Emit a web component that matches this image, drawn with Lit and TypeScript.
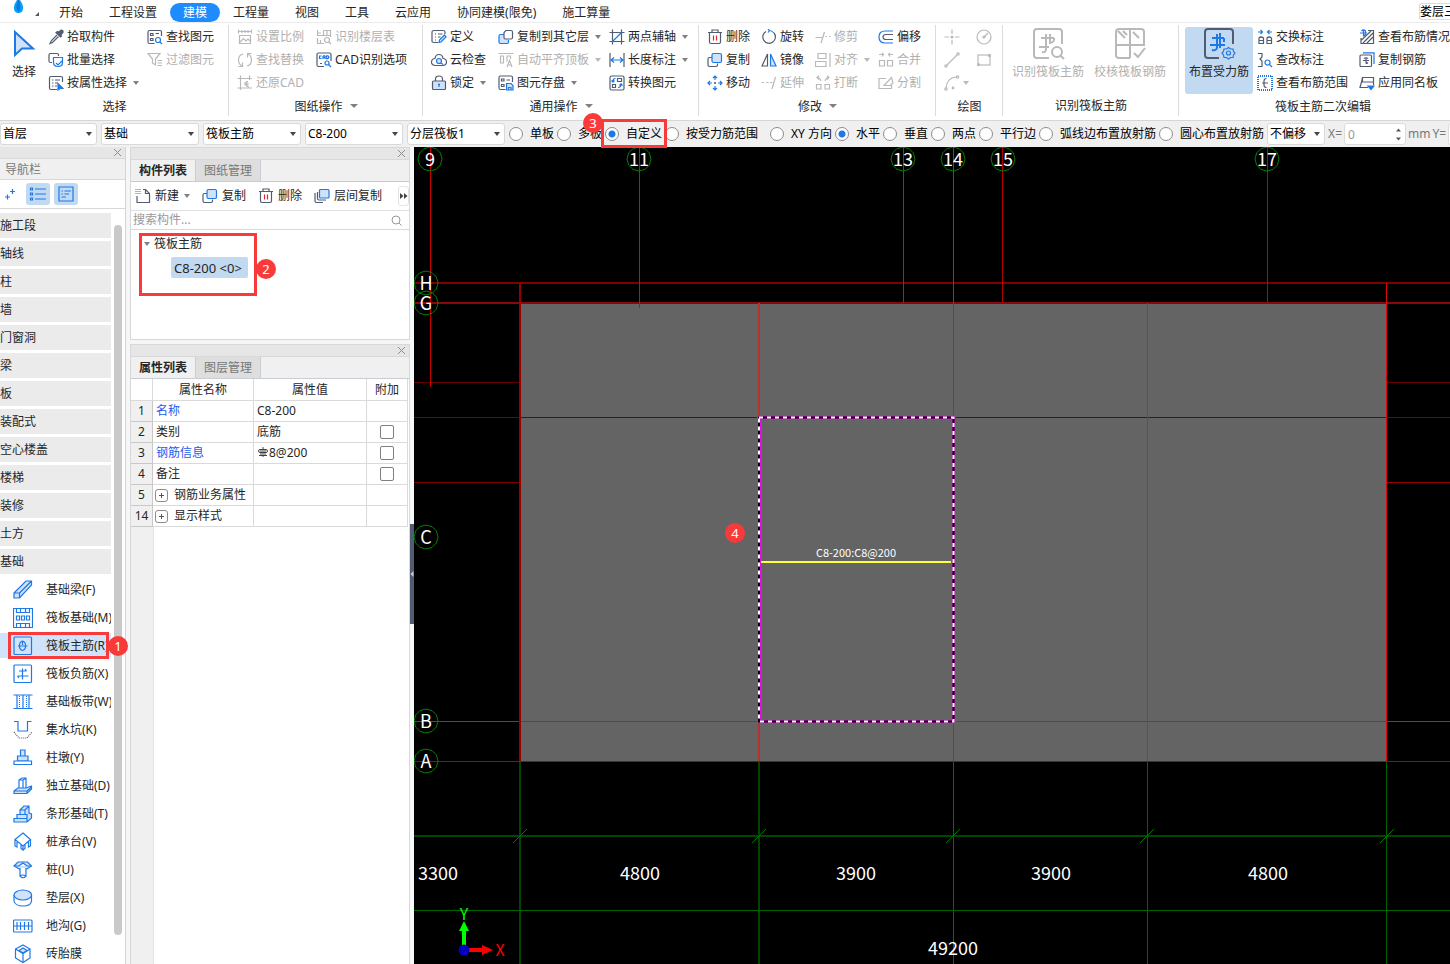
import { LitElement, html, svg, css, nothing, TemplateResult, SVGTemplateResult } from "lit";
import { customElement, state } from "lit/decorators.js";
import { classMap } from "lit/directives/class-map.js";

/* Icon artwork. Classes: k = slate stroke, b = blue stroke, g = disabled stroke,
   f adds a pale fill, s turns the stroke into a solid fill. */
const ICONS: Record<string, SVGTemplateResult> = {
  pick: svg`<path class="k" d="M9 6 3.5 11.5 2 14.5 4.5 13.5 10.5 7.5"/><path class="k s" d="M8 3.5 12.5 8 13.5 7 12.5 6 15 3.5Q15.5 1 13 1L10.5 3.5 9.5 2.5Z"/>`,
  batch: svg`<path class="k" d="M4 10.5H2.5Q1 10.5 1 9V3Q1 1.5 2.5 1.5H9Q10.5 1.5 10.5 3V4"/><path class="b" d="M5.5 5.5H14.5V10.5Q14.5 14.5 10 14.5T5.5 10.5Z"/><path class="b" d="M8 11 10 13 14 9"/>`,
  byattr: svg`<path class="k" d="M9 14.5H3Q1.5 14.5 1.5 13V3Q1.5 1.5 3 1.5H13Q14.5 1.5 14.5 3V7M4 5H5.5M7 5H12M4 8H5.5M7 8H10M4 11H5.5M7 11H9"/><path class="b s" d="M10 8.5V15L12 13.5H15Z"/>`,
  find: svg`<path class="k" d="M7.5 14.5H2.5Q1 14.5 1 13V3Q1 1.5 2.5 1.5H13Q14.5 1.5 14.5 3V7M3.5 4.5H6V6.5H3.5ZM8.5 4.5H12M3.5 9.5H6V11.5H3.5Z"/><circle class="b" cx="11" cy="11" r="2.5"/><path class="b" d="M13 13 15 15"/>`,
  filter: svg`<path class="g" d="M1 1.5H13L8.5 7V13L5.5 11V7ZM10.5 8.5H15M10.5 11H15M10.5 13.5H15"/>`,
  scale: svg`<path class="g" d="M1 2.5H15M1.5 0.5V4.5M5 1V4M8 1V4M11 1V4M14.5 0.5V4.5M2.5 6.5H13.5V14.5H2.5ZM3 13 6.5 9.5 9 12 11 10 13.5 12.5"/>`,
  swap: svg`<path class="g" d="M6 2Q1.5 3 1.5 8 1.5 12 5 14M5.5 10.5V14.5H1.5M10 14Q14.5 13 14.5 8 14.5 4 11 2M10.5 5.5V1.5H14.5"/>`,
  restore: svg`<path class="g" d="M3.5 0.5V15M0.5 3.5H15M12.5 0.5V5M0.5 13H15M11 6.5Q7 7 8 9T12 12M7 9H12M10 6V12"/>`,
  floor: svg`<path class="g" d="M1.5 1V6.5H7M1.5 4H5M7.5 1.5H14.5V8M7.5 1.5V6.5H14.5M11 1.5V6.5M1.5 9V14.5H8M4.5 11V14"/><circle class="g" cx="11" cy="11" r="2.5"/><path class="g" d="M13 13 15 15"/>`,
  cad: svg`<path class="k" d="M8 14.5H2.5Q1 14.5 1 13V2.5Q1 1 2.5 1H13.5Q15 1 15 2.5V9M4 11.5H6"/><path class="b" d="M5.5 4H3.5V6.5H5.5M7 7V4.5L8 3.5 9 4.5V7M7 5.5H9M10.5 3.8V6.7H12L13 5.2 12 3.8Z"/><circle class="b" cx="11" cy="11" r="2"/><path class="b" d="M12.5 12.5 15 15"/>`,
  define: svg`<path class="k" d="M7 13.5H3Q1 13.5 1 12V3Q1 1.5 3 1.5H12Q14 1.5 14 3V5M4 5H5M7 5H11.5M4 8H5M7 8H9.5M4 11H5"/><path class="b f" d="M8 13.5 8.5 11 13.5 6 15 8 10 13Z"/>`,
  cloud: svg`<path class="k" d="M4 13.5Q0.5 13 0.5 10T4 6.5Q4.5 2.5 8 2.5T12 6.5Q15.5 7 15.5 10T12 13.5Z"/><circle class="b f" cx="8" cy="9" r="2.5"/><path class="b" d="M10 11 12 12.5"/>`,
  lock: svg`<path class="k" d="M4.5 6V4Q4.5 1 8 1T11.5 4V6"/><rect class="k f" x="1.5" y="6" width="13" height="8.5" rx="1"/><path class="b" d="M8 8.5V12M7 9.5H9"/>`,
  copyto: svg`<path class="b f" d="M6 5.5H2.5Q1 5.5 1 7V13Q1 14.5 2.5 14.5H9Q10.5 14.5 10.5 13V11"/><path class="k w" d="M8 1.5H13Q14.5 1.5 14.5 3V8.5Q14.5 10 13 10H7.5Q6 10 6 8.5V3.5Z"/>`,
  flush: svg`<path class="g" d="M0.5 1.5H15.5M2.5 4V11H5.5V4ZM9 9.5V4H12.5V7M9 15 11.5 8.5 14 15M10 13H13"/>`,
  save: svg`<path class="k" d="M7.5 14.5H2.5Q1 14.5 1 13V2.5Q1 1 2.5 1H13Q14.5 1 14.5 2.5V7M3.5 4H6V6H3.5ZM8.5 5H12M3.5 9.5H6V11.5H3.5Z"/><path class="b f" d="M8.5 8.5H13L15 10.5V15H8.5ZM10.5 15V12.5H13V15"/>`,
  axis2: svg`<path class="k" d="M3.5 0.5V15.5M12.5 0.5V15.5M0.5 3.5H15.5M0.5 12.5H15.5"/><path class="b" d="M3 13 13 3"/>`,
  dim: svg`<path class="k" d="M1 1V15M15 1V15"/><path class="b" d="M2 8H14M5 5.5 2 8 5 10.5M11 5.5 14 8 11 10.5"/>`,
  conv: svg`<rect class="k" x="1" y="1" width="14" height="14" rx="1.5"/><path class="k" d="M8.5 3.5H12.5V6.5H8.5ZM3.5 9.5H6.5V12.5H3.5Z"/><path class="b" d="M6.5 3.5Q3.5 3.5 4 7M2.5 5.5 4 7.2 5.5 5.5M9 12.5Q12 12.5 12 9M10.5 10.5 12 8.8 13.5 10.5"/>`,
  del: svg`<path class="k" d="M1 3.5H15M5 3.5V1H11V3.5M2.5 3.5V13Q2.5 14.5 4 14.5H12Q13.5 14.5 13.5 13V3.5"/><path class="r" d="M6.5 6.5V11.5M9.5 6.5V11.5"/>`,
  copy: svg`<path class="k" d="M5 5.5H2.5Q1 5.5 1 7V13Q1 14.5 2.5 14.5H9Q10.5 14.5 10.5 13V11.5"/><rect class="b f" x="5" y="1.5" width="9.5" height="9" rx="1.5"/>`,
  move: svg`<path class="b" d="M8 1V5M8 11V15M1 8H5M11 8H15M6 3 8 1 10 3M6 13 8 15 10 13M3 6 1 8 3 10M13 6 15 8 13 10"/><path class="k" d="M8 7V9M7 8H9"/>`,
  rotate: svg`<path class="k" d="M5 2.5A6.3 6.3 0 1 0 13 4"/><path class="b" d="M8 1.5Q11 1.5 13 4M7 0 8.5 1.5 7 3.5"/>`,
  mirror: svg`<path class="k" d="M6.5 2V14H1Z"/><path class="b f" d="M9.5 2V14H15Z"/>`,
  trim: svg`<path class="g" d="M0.5 8.5H7M9.5 3 6 14M10.5 7.5H12M14 7.5H15.5"/>`,
  align: svg`<path class="g" d="M15 1V15M3 1.5H11V6.5H3ZM0.5 9.5H11V14.5H0.5Z"/>`,
  extend: svg`<path class="g" d="M0.5 7.5H3M5 7.5H7.5M9 7.5H11.5M14.5 2 11 14"/>`,
  brk: svg`<path class="g" d="M1.5 9.5H6V14H1.5ZM10 9.5H14.5V14H10ZM6 6Q5 2.5 2 2.5M4 0.8 2 2.5 4 4.5M10 6Q11 2.5 14 2.5M12 0.8 14 2.5 12 4.5"/>`,
  offset: svg`<path class="b" d="M15 2H7Q1 2 1 8T7 14H15"/><path class="k" d="M15 5.5H8Q5 5.5 5 8T8 10.5H15"/>`,
  merge: svg`<path class="g" d="M1.5 8.5H6.5V14H1.5ZM9.5 8.5H14.5V14H9.5ZM1 2.5H5.5M4 1 5.5 2.5 4 4.5M15 2.5H10.5M12 1 10.5 2.5 12 4.5"/>`,
  split: svg`<path class="g" d="M8 3.5H1V13.5H13.5V9M6 10.5 13.5 2.5 15 8 12 10.5Z"/>`,
  point: svg`<path class="g" d="M8 0.5V5M8 11V15.5M0.5 8H5M11 8H15.5"/><circle class="g s" cx="8" cy="8" r="1"/>`,
  circle: svg`<circle class="g" cx="8" cy="8" r="7"/><path class="g" d="M8 8 12 4"/><circle class="g s" cx="8" cy="8" r="1"/>`,
  line: svg`<path class="g" d="M3 13 13 3"/><circle class="g" cx="2" cy="14" r="1.2"/><circle class="g" cx="14" cy="2" r="1.2"/>`,
  rect: svg`<rect class="g" x="2" y="3" width="12" height="10"/><circle class="g s" cx="2.5" cy="12.5" r="1"/><circle class="g s" cx="13.5" cy="3.5" r="1"/>`,
  arc: svg`<path class="g" d="M2 13Q3 3 12 2"/><circle class="g" cx="2" cy="14" r="1.2"/><circle class="g" cx="13.5" cy="2" r="1.2"/><circle class="g s" cx="9" cy="13" r=".8"/>`,
  swapnote: svg`<path class="k" d="M2 14.5V9Q4 7 6.5 9V14.5ZM2 11.5H6.5M10 14.5V9Q12 7 14.5 9V14.5ZM10 11.5H14.5"/><path class="b" d="M1 3H5.5M3.5 1 5.5 3 3.5 5M15 3H10.5M12.5 1 10.5 3 12.5 5"/>`,
  editnote: svg`<path class="k" d="M1 1.5H5V5L3 7 5 9V14.5H1"/><circle class="b" cx="10.5" cy="10.5" r="2.5"/><path class="b" d="M12.5 12.5 15 15"/>`,
  range: svg`<rect class="b d thick" x="1" y="1" width="14" height="14"/><path class="k" d="M9.5 3.5Q7 3.5 7 6V10Q7 12.5 9.5 12.5M5 8H11"/>`,
  viewbar: svg`<path class="k" d="M9 1.5H14.5V14.5H2V9M4 14 14 4M8 14 14 8M2.5 11 12 2"/><path class="b" d="M1 4H8M4.5 1V7.5M2.5 2Q4.5 0 6.5 2V4.5Q6.5 6.5 4.5 6.5"/>`,
  copybar: svg`<rect class="k" x="1" y="3" width="11.5" height="11.5" rx="1"/><path class="b" d="M4 0.8H15V12"/><path class="k" d="M4 8.5H10M7 5.5V11.5M5 6.5Q7 5 9 6.5M9 10.5Q8 11.5 7 11.5"/>`,
  applyslab: svg`<path class="k" d="M3.5 2.5H14.5V7H3.5ZM2.5 7 1 12.5H9M3.5 2.5 2.5 7M14.5 7V10"/><path class="b s" d="M9 11H15L12 14.5Z"/>`,
  newc: svg`<path class="k" d="M8 1.5H10.5L14.5 5.5V14.5H2V8"/><path class="k" d="M10.5 1.5V5.5H14.5"/><path class="b d" d="M0.5 1.5H6M0.5 3.5H6M0.5 5.5H6"/>`,
  floorcopy: svg`<path class="k" d="M1 5V13Q1 14.5 2.5 14.5H9M3.5 4V10.5Q3.5 12 5 12H12"/><rect class="b f" x="5.5" y="1.5" width="9.5" height="8.5" rx="1"/>`,
};

const NAV_ICONS: Record<string, SVGTemplateResult> = {
  beam: svg`<path class="b f" d="M1 13 13 1H18.5V5L6.5 18H1ZM1 13H6.5V18M6.5 13 18.5 1"/>`,
  raft: svg`<path class="b" d="M0.5 0.5H19.5V19.5H0.5ZM3.5 0.5V4.5H7.5V0.5M12.5 0.5V4.5H16.5V0.5M7.5 4.5H12.5V0.5M3.5 19.5V15.5H7.5V19.5M12.5 19.5V15.5H16.5V19.5M7.5 15.5H12.5M3.5 8H6.5V12H3.5ZM8.5 8H11.5V12H8.5ZM13.5 8H16.5V12H13.5Z"/>`,
  main: svg`<rect class="b" x="1" y="1" width="17.5" height="17.5" rx="1"/><path class="b" d="M5 10H14.5M9.5 5V9M9.5 5Q6 6 6.5 11 7 14 9.5 14.5M9.5 5Q13 6 12.5 11 12 14 9.5 14.5"/>`,
  neg: svg`<rect class="b" x="1" y="1" width="17.5" height="17.5" rx="1"/><path class="b" d="M6 7H13.5M4.5 12H15.5M9.5 4.5V15.5M13.5 7 12 5M4.5 12 6 14"/>`,
  strip: svg`<path class="b" d="M0.5 3H19.5M0.5 16.5H19.5M4 3V16.5M16 3V16.5M10 3V16.5"/><path class="b d" d="M6.5 4V16M13.5 4V16"/>`,
  sump: svg`<path class="b" d="M1 1.5H5V11H14.5V1.5H18.5"/><path class="k d" d="M1 12 6 18H14L19 12"/>`,
  pier: svg`<path class="b f" d="M7.5 2H12V8H7.5ZM4.5 8H15V13H4.5Z"/><path class="b w" d="M1 13H18.5V16.5H1Z"/>`,
  isolated: svg`<path class="b" d="M6 12V4L9 2H13V12M10 4V13M6 4H10L13 2"/><path class="b f" d="M1 15 5 12H13L18.5 10V13L14 17.5H1ZM1 15H14V17.5M14 15 18.5 11"/>`,
  stripf: svg`<path class="b f" d="M7 6 11 2H16V9L18.5 10V14L14 18H1V14.5H4V10.5H7ZM7 6H12V10.5H14V14.5H14V18M12 6 16 2M4 10.5H14M4 14.5H14"/>`,
  cap: svg`<path class="b" d="M10 1 17.5 7.5 10 14 2 7.5ZM2 7.5V14L4 15V10M17.5 7.5V14L15.5 15V10M10 14V18L8 16.5V13M10 18 12 16.5V13"/>`,
  pile: svg`<path class="b f" d="M1 6 5 2H14.5L18.5 6 14 9H6Z"/><path class="b w" d="M7 8V16Q10 19.5 13 16V8M1 6H6L10 3 14 6H18.5M7 16Q10 14 13 16"/>`,
  cushion: svg`<path class="b" d="M1 7V13Q2 18 10 18T18.5 13V7"/><ellipse class="b f" cx="9.8" cy="7" rx="8.8" ry="5"/>`,
  trench: svg`<rect class="b" x="0.5" y="4" width="18.5" height="12" rx="1"/><path class="b" d="M1 10H19M4 6V14M7.5 6V14M11.5 6V14M15.5 6V14"/>`,
  mould: svg`<path class="b" d="M10 1 17 5V14L10 18.5 2.5 14V5Z"/><path class="b f" d="M6 6.5 10 4 14 6.5 10 9Z"/><path class="b" d="M2.5 5 10 9.5 17 5M10 9.5V18"/>`,
};

const icon = (n: string) => html`<svg class="ic" viewBox="0 0 16 16" aria-hidden="true">${ICONS[n]}</svg>`;

type Tool = { i: string; t: string; off?: boolean; caret?: boolean };
const T = (i: string, t: string, o = ""): Tool => ({ i, t, off: o.includes("x"), caret: o.includes("v") });

const SELECT_COLS = [
  [T("pick", "拾取构件"), T("batch", "批量选择"), T("byattr", "按属性选择", "v")],
  [T("find", "查找图元"), T("filter", "过滤图元", "x")],
];
const SHEET_COLS = [
  [T("scale", "设置比例", "x"), T("swap", "查找替换", "x"), T("restore", "还原CAD", "x")],
  [T("floor", "识别楼层表", "x"), T("cad", "CAD识别选项")],
];
const COMMON_COLS = [
  [T("define", "定义"), T("cloud", "云检查"), T("lock", "锁定", "v")],
  [T("copyto", "复制到其它层", "v"), T("flush", "自动平齐顶板", "xv"), T("save", "图元存盘", "v")],
  [T("axis2", "两点辅轴", "v"), T("dim", "长度标注", "v"), T("conv", "转换图元")],
];
const MODIFY_COLS = [
  [T("del", "删除"), T("copy", "复制"), T("move", "移动")],
  [T("rotate", "旋转"), T("mirror", "镜像"), T("extend", "延伸", "x")],
  [T("trim", "修剪", "x"), T("align", "对齐", "xv"), T("brk", "打断", "x")],
  [T("offset", "偏移"), T("merge", "合并", "x"), T("split", "分割", "x")],
];
const EDIT_COLS = [
  [T("swapnote", "交换标注"), T("editnote", "查改标注"), T("range", "查看布筋范围")],
  [T("viewbar", "查看布筋情况"), T("copybar", "复制钢筋"), T("applyslab", "应用同名板")],
];

const NAV = ["施工段", "轴线", "柱", "墙", "门窗洞", "梁", "板", "装配式", "空心楼盖", "楼梯", "装修", "土方", "基础"];
const SUB: [string, string][] = [
  ["beam", "基础梁(F)"], ["raft", "筏板基础(M)"], ["main", "筏板主筋(R)"], ["neg", "筏板负筋(X)"],
  ["strip", "基础板带(W)"], ["sump", "集水坑(K)"], ["pier", "柱墩(Y)"], ["isolated", "独立基础(D)"],
  ["stripf", "条形基础(T)"], ["cap", "桩承台(V)"], ["pile", "桩(U)"], ["cushion", "垫层(X)"],
  ["trench", "地沟(G)"], ["mould", "砖胎膜"],
];

const AXES_TOP: [number, string][] = [[430, "9"], [639, "11"], [903, "13"], [953, "14"], [1003, "15"], [1267, "17"]];
const AXES_LEFT: [number, string][] = [[283, "H"], [303, "G"], [537, "C"], [721, "B"], [761, "A"]];
const GRID: [number, number, number, number, string, number][] = [
  [414, 283, 1450, 283, "#800000", 2],
  [414, 303, 1450, 303, "#8c0808", 2],
  [414, 382.5, 520, 382.5, "#640000", 1],
  [1387, 382.5, 1450, 382.5, "#640000", 1],
  [414, 417.5, 1450, 417.5, "#780000", 1],
  [414, 482.5, 520, 482.5, "#800000", 1],
  [1387, 482.5, 1450, 482.5, "#900000", 1],
  [414, 721.5, 1450, 721.5, "#d81010", 1],
  [414, 761.5, 1450, 761.5, "#b40000", 1],
  [430.5, 147, 430.5, 387, "#c80000", 1],
  [639.5, 147, 639.5, 308, "#e60000", 1],
  [903.5, 147, 903.5, 303, "#f00000", 1],
  [953.5, 147, 953.5, 761, "#e61010", 1],
  [1002.5, 147, 1002.5, 303, "#b40000", 1],
  [1267.5, 147, 1267.5, 303, "#c80000", 1],
  [520, 283, 520, 761, "#960000", 2],
  [759, 303, 759, 761, "#b43232", 2],
  [1147.5, 303, 1147.5, 761, "#d21e1e", 1],
  [1386.5, 283, 1386.5, 761, "#dc0a0a", 1],
  [520, 762, 520, 964, "#004600", 2],
  [759, 762, 759, 964, "#004600", 2],
  [953.5, 762, 953.5, 964, "#007000", 1],
  [1147.5, 762, 1147.5, 964, "#006400", 1],
  [1386.5, 762, 1386.5, 964, "#006400", 1],
  [414, 836, 1450, 836, "#004600", 2],
  [414, 910.5, 1450, 910.5, "#006400", 1],
];
const DIMS: [number, number, string][] = [
  [438, 880, "3300"], [640, 880, "4800"], [856, 880, "3900"], [1051, 880, "3900"], [1268, 880, "4800"], [953, 955, "49200"],
];

@customElement("app-root")
export class AppRoot extends LitElement {
  @state() private tab = "建模";
  @state() private nav = "筏板主筋(R)";

  static styles = css`
    :host {
      display: flex; flex-direction: column; height: 100vh; overflow: hidden; position: relative;
      background: #f5f6f8; color: #262626;
      font: 12px/16px "Noto Sans", "Noto Sans CJK SC", sans-serif;
    }
    * { box-sizing: border-box; }
    button, input, select { font: inherit; color: inherit; margin: 0; }
    button { border: 0; padding: 0; background: none; white-space: nowrap; }
    svg { display: block; flex: none; }
    .ic { width: 16px; height: 16px; }
    .k, .b, .g, .r { fill: none; stroke-width: 1.2; }
    .k { stroke: #525c70; }
    .b { stroke: #1e78e6; }
    .g { stroke: #b9b9b9; }
    .r { stroke: #e02828; }
    .f { fill: #cfe2fa; }
    .w { fill: #fff; }
    .k.s { fill: #525c70; }
    .b.s { fill: #1e78e6; }
    .g.s { fill: #b9b9b9; }
    .d { stroke-dasharray: 1 1; }
    .thick { stroke-width: 2; }
    .caret { width: 0; height: 0; border: 3px solid transparent; border-top: 4px solid #808080; border-bottom: 0; flex: none; }
    .caret.big { border-width: 4px 4px 0; }

    .tabs { display: flex; height: 22px; flex: none; background: #fff; align-items: flex-end; }
    .logo { width: 46px; height: 20px; margin-bottom: 2px; }
    .tab { height: 19px; padding: 0 13px; border-radius: 10px; line-height: 19px; }
    .tab.on { background: #1e8cff; color: #fff; }
    .floor3d { margin-left: auto; width: 31px; height: 17px; border: 1px solid #dcdcdc; border-right: 0; border-radius: 3px 0 0 3px; overflow: hidden; margin-bottom: 2px; color: #000; text-align: left; line-height: 15px; }

    .ribbon { display: flex; height: 99px; flex: none; background: #fff; border-top: 1px solid #ececec; border-bottom: 1px solid #d6d6d6; padding-top: 2px; overflow: hidden; }
    .group { flex: none; display: flex; flex-direction: column; position: relative; }
    .group::after { content: ""; position: absolute; right: 0; top: 0; height: 91px; width: 1px; background: #dcdcdc; }
    .body { display: grid; height: 69px; }
    .label { display: flex; height: 28px; align-items: center; justify-content: center; gap: 7px; }
    .col { display: flex; flex-direction: column; align-items: flex-start; }
    .tool { display: flex; align-items: center; height: 23px; gap: 3px; }
    .tool .caret { margin-left: 3px; }
    .off { color: #b0b0b0; }
    .off .caret { border-top-color: #b9b9b9; }
    .big { display: flex; flex-direction: column; align-items: center; gap: 3px; padding-top: 2px; }
    .big svg { width: 34px; height: 34px; }
    .big.on { background: #c2d9f2; border-radius: 3px; height: 67px; margin-top: 2px; width: 68px; padding: 0; }
    .g1 { width: 229px; } .g1 .body { grid-template-columns: 48px 99px 1fr; }
    .g2 { width: 194px; } .g2 .body { grid-template-columns: 79px 1fr; padding-left: 8px; }
    .g3 { width: 276px; } .g3 .body { grid-template-columns: 67px 111px 1fr; padding-left: 8px; }
    .g4 { width: 237px; } .g4 .body { grid-template-columns: 54px 54px 63px 1fr; padding-left: 8px; }
    .g5 { width: 67px; } .g5 .body { grid-template-columns: 16px 16px; column-gap: 16px; align-items: center; padding-left: 8px; }
    .g5 .tool { gap: 0; }
    .g6 { width: 176px; } .g6 .body { grid-template-columns: 82px 82px; padding-left: 4px; }
    .g7 { width: 288px; } .g7 .body { grid-template-columns: 72px 102px 1fr; padding-left: 6px; }

    .opts { display: flex; height: 26px; flex: none; background: #f0f0f0; align-items: center; color: #000; white-space: nowrap; overflow: hidden; }
    .sel { position: relative; width: 98px; margin-right: 4px; flex: none; }
    .sel:first-child { width: 97px; }
    .sel select { appearance: none; width: 100%; height: 22px; border: 1px solid #d9d9d9; border-radius: 3px; background: #fff; padding: 0 0 0 2px; line-height: 20px; display: block; }
    .sel .caret { position: absolute; right: 5px; top: 9px; border-top-color: #444; pointer-events: none; }
    .sel.short { width: 58px; margin-right: 3px; }
    .opts label { display: flex; align-items: center; gap: 7px; margin-right: 3px; flex: none; }
    .opts input[type="radio"] { appearance: none; width: 14px; height: 14px; border: 1px solid #8c8c8c; border-radius: 50%; background: #fff; }
    .opts input[type="radio"]:checked { background: radial-gradient(circle, #1e78e6 0 3px, #fff 4px); }
    .vr { width: 1px; height: 18px; background: #d0d0d0; margin: 0 1px 0 8px; }
    .opts .num { gap: 2px; color: #777; margin-right: 2px; }
    .num .box { position: relative; display: block; }
    .num input { width: 62px; height: 22px; border: 1px solid #dcdcdc; border-radius: 3px; padding: 0 3px; background: #fff; color: #999; display: block; }
    .spin { position: absolute; right: 4px; top: 5px; }

    .main { display: flex; flex: 1; min-height: 0; }
    .strip { height: 12px; flex: none; background: #e6e6e6; border-bottom: 1px solid #d8d8d8; display: flex; justify-content: flex-end; align-items: center; padding-right: 3px; }
    .strip button { display: block; }
    .nav { width: 126px; flex: none; background: #fff; border-right: 1px solid #d4d4d4; display: flex; flex-direction: column; min-height: 0; }
    .navhead { height: 21px; flex: none; background: #f0f0f0; border-bottom: 1px solid #d8d8d8; color: #777; padding: 0 5px; line-height: 21px; }
    .navbar { height: 29px; flex: none; border-bottom: 1px solid #d8d8d8; display: flex; align-items: center; padding-left: 4px; gap: 4px; }
    .navbar button { width: 24px; height: 22px; border-radius: 3px; background: #c2d9f2; display: grid; place-items: center; }
    .navbar .plus { width: 12px; background: none; margin-right: 6px; }
    .scroll { display: flex; flex: 1; min-height: 0; overflow: hidden; gap: 3px; }
    .list { width: 111px; padding-top: 4px; display: flex; flex-direction: column; gap: 3px; }
    .list button { height: 25px; flex: none; text-align: left; overflow: hidden; line-height: 25px; }
    .list .cat { background: #ebebeb; }
    .list .sub { display: flex; align-items: center; gap: 13px; padding-left: 13px; }
    .sub svg { width: 20px; height: 20px; }
    .list .sub.on { background: #d0e3fa; }
    .thumb { width: 8px; height: 710px; max-height: 94%; margin-top: 16px; background: #c9c9c9; border-radius: 4px; }

    .mid { width: 280px; margin-left: 4px; flex: none; display: flex; flex-direction: column; min-height: 0; gap: 4px; }
    .panel { background: #fff; border: 1px solid #d8d8d8; display: flex; flex-direction: column; }
    .panel.comp { height: 193px; flex: none; }
    .panel.prop { flex: 1; min-height: 0; border-bottom: 0; }
    .ptabs { height: 22px; flex: none; display: flex; background: #f0f0f0; border-bottom: 1px solid #c8ccd4; }
    .ptabs button { width: 65px; border-right: 1px solid #c8ccd4; font-weight: 700; }
    .ptabs button + button { background: #dedede; color: #777; font-weight: 400; }
    .ptools { height: 29px; flex: none; display: flex; align-items: center; padding-left: 4px; border-bottom: 1px solid #e0e0e0; gap: 12px; }
    .ptools .tool { height: 28px; gap: 4px; }
    .ptools .tool .caret { margin-left: 1px; }
    .ptools .more { margin-left: auto; width: 11px; height: 20px; border: 1px solid #e4e4e4; border-radius: 3px; display: grid; place-items: center; }
    .search { height: 19px; flex: none; display: flex; align-items: center; border-bottom: 1px solid #d8d8d8; padding-right: 7px; }
    .search input { flex: 1; min-width: 0; border: 0; padding: 0 2px; height: 16px; outline: 0; background: none; }
    .search input::placeholder { color: #999; }
    .tree { padding: 4px 0 0 13px; }
    .node { display: flex; align-items: center; gap: 4px; height: 20px; }
    .leaf { margin: 3px 0 0 27px; height: 21px; width: 77px; background: #c2d9f2; border-radius: 2px; padding: 0 3px; text-align: left; display: block; font-size: 13px; }
    .fill { flex: 1; min-height: 0; display: flex; flex-direction: column; }
    .fill::after { content: ""; flex: 1; width: 22px; background: #f0f0f0; border-right: 1px solid #e4e4e4; }
    table { border-collapse: separate; border-spacing: 0; table-layout: fixed; width: 277px; }
    th, td { height: 21px; padding: 0 3px; border-right: 1px solid #dadada; border-bottom: 1px solid #dadada; font-weight: 400; text-align: left; line-height: 18px; overflow: hidden; white-space: nowrap; }
    thead th { text-align: center; height: 22px; }
    tbody th { background: #f0f0f0; text-align: center; padding: 0; border-color: #c8c8c8; }
    .blue { color: #1e5af0; }
    td.c { padding: 0; }
    td input { appearance: none; display: block; width: 14px; height: 14px; border: 1px solid #808080; border-radius: 2px; background: #fff; }
    td.c input { margin: 0 auto; }
    .row { display: flex; align-items: center; }
    .exp { width: 13px; height: 13px; border: 1px solid #8c8c8c; border-radius: 3px; margin: 0 6px 0 -1px; display: grid; place-items: center; }

    .gutter { width: 4px; flex: none; background: #f7f8fa; display: flex; align-items: center; }
    .handle { width: 4px; height: 100px; background: #525c70; margin-top: 37px; display: grid; place-items: center; }
    .canvas { flex: 1; min-width: 0; background: #000; }
    .canvas svg { width: 100%; height: 100%; }
    .canvas text { font-family: "Noto Sans CJK SC", sans-serif; font-size: 18px; fill: #fff; text-anchor: middle; }
    .canvas .tag { font-size: 11px; }
    .canvas .ax { font-size: 16px; }
    .canvas .axy { fill: #0f0; }
    .canvas .axx { fill: #f00; }

    .mark { position: absolute; border: 3px solid #f93a3a; pointer-events: none; }
    .dot { position: absolute; width: 20px; height: 20px; border-radius: 50%; background: #f93a3a; color: #fff; text-align: center; line-height: 20px; pointer-events: none; font-size: 13px; }
    .m1 { left: 8px; top: 632px; width: 101px; height: 27px; } .d1 { left: 108px; top: 636px; }
    .m2 { left: 139px; top: 233px; width: 118px; height: 63px; } .d2 { left: 256px; top: 259px; }
    .m3 { left: 601px; top: 119px; width: 66px; height: 29px; } .d3 { left: 583px; top: 113px; }
    .d4 { left: 725px; top: 523px; }
  `;

  private tool(t: Tool) {
    return html`<button class=${classMap({ tool: true, off: !!t.off })}>${icon(t.i)}<span>${t.t}</span>${t.caret ? html`<i class="caret"></i>` : nothing}</button>`;
  }
  private cols(c: Tool[][]) {
    return c.map((l) => html`<div class="col">${l.map((t) => this.tool(t))}</div>`);
  }
  private group(cls: string, label: string, body: unknown, caret = false): TemplateResult {
    return html`<section class="group ${cls}"><div class="body">${body}</div>
      <div class="label"><span>${label}</span>${caret ? html`<i class="caret big"></i>` : nothing}</div></section>`;
  }
  private dropdown(v: string, name: string, short = false) {
    return html`<span class=${classMap({ sel: true, short })}><select aria-label=${name}><option>${v}</option></select><i class="caret"></i></span>`;
  }
  private radio(name: string, t: string, on = false) {
    return html`<label><input type="radio" name=${name} .checked=${on} />${t}</label>`;
  }
  private strip() {
    return html`<div class="strip"><button aria-label="关闭"><svg width="9" height="9" viewBox="0 0 9 9"><path d="M1 1 8 8M8 1 1 8" stroke="#8c8c8c" fill="none" /></svg></button></div>`;
  }

  private ribbonBar() {
    return html`<div class="ribbon">
      ${this.group("g1", "选择", html`<button class="big"><svg viewBox="0 0 34 34"><path class="b f thick" d="M8 5V28L15 21.5 26 21.5Z" /></svg><span>选择</span></button>${this.cols(SELECT_COLS)}`)}
      ${this.group("g2", "图纸操作", this.cols(SHEET_COLS), true)}
      ${this.group("g3", "通用操作", this.cols(COMMON_COLS), true)}
      ${this.group("g4", "修改", this.cols(MODIFY_COLS), true)}
      ${this.group("g5", "绘图", html`${["point", "circle", "line", "rect"].map((n) => html`<button class="tool" aria-label=${n}>${icon(n)}</button>`)}<button class="tool off" aria-label="arc">${icon("arc")}<i class="caret"></i></button>`)}
      ${this.group("g6", "识别筏板主筋", html`
        <button class="big off"><svg viewBox="0 0 34 34"><path class="g thick" d="M18 31H6Q3 31 3 28V5Q3 2 6 2H28Q31 2 31 5V17M10 11H23M8 20H18M15 7V22Q15 26 11 25M19 7V17M23 11Q24 15 19 16" /><circle class="g thick" cx="26" cy="25" r="5" /><path class="g thick" d="M29 28 33 32" /></svg><span>识别筏板主筋</span></button>
        <button class="big off"><svg viewBox="0 0 34 34"><path class="g thick" d="M17 31H6Q3 31 3 28V5Q3 2 6 2H28Q31 2 31 5V18H3M17 2V31M5 4 12 11M10 4 14 8M20 5 26 11" /><path class="g thick" d="M21 26 25 30 32 21" /></svg><span>校核筏板钢筋</span></button>`)}
      ${this.group("g7", "筏板主筋二次编辑", html`
        <button class="big on"><svg viewBox="0 0 34 34"><path class="k thick" d="M17 31H6Q3 31 3 28V5Q3 2 6 2H28Q31 2 31 5V17" /><path class="b thick" d="M10 11H22M8 18H23M15 7V20Q15 24 10 23M18 6V21M22 11V15" /><circle class="b" cx="26.5" cy="26" r="2" /><path class="b" d="M26.5 20.5 28.5 22 31 22 31.5 24.5 33 26 31.5 28 31 30.5 28.5 30.5 26.5 32 24.5 30.5 22 30.5 21.5 28 20 26 21.5 24.5 22 22 24.5 22Z" /></svg><span>布置受力筋</span></button>${this.cols(EDIT_COLS)}`)}
    </div>`;
  }

  private optionsBar() {
    return html`<div class="opts">
      ${this.dropdown("首层", "楼层")}${this.dropdown("基础", "类型")}${this.dropdown("筏板主筋", "构件类型")}${this.dropdown("C8-200", "构件")}${this.dropdown("分层筏板1", "分层")}
      ${this.radio("scope", "单板")}${this.radio("scope", "多板")}${this.radio("scope", "自定义", true)}${this.radio("scope", "按受力筋范围")}
      <i class="vr"></i>
      ${["XY 方向", "水平", "垂直", "两点", "平行边", "弧线边布置放射筋", "圆心布置放射筋"].map((t) => this.radio("dir", t, t === "水平"))}
      ${this.dropdown("不偏移", "偏移", true)}
      <label class="num">X=<span class="box"><input value="0" /><svg class="spin" width="7" height="13" viewBox="0 0 7 13"><path d="M1 3.5 3.5 0.5 6 3.5ZM1 9.5 3.5 12.5 6 9.5Z" fill="#555" /></svg></span>mm</label>
      <label class="num">Y=<span class="box"><input value="0" /></span></label>
    </div>`;
  }

  private navPanel() {
    return html`<nav class="nav">${this.strip()}
      <div class="navhead">导航栏</div>
      <div class="navbar">
        <button class="plus" aria-label="添加"><svg width="12" height="12" viewBox="0 0 12 12"><path class="b" d="M8.5 1V6M6 3.5H11M3.5 6.5V11.5M1 9H6" /></svg></button>
        <button aria-label="列表"><svg width="18" height="16" viewBox="0 0 18 16"><path class="b" d="M6 3H17M6 8H17M6 13H17M1.5 2H3.5V4H1.5ZM1.5 7H3.5V9H1.5ZM1.5 12H3.5V14H1.5Z" /></svg></button>
        <button aria-label="面板"><svg width="16" height="16" viewBox="0 0 16 16"><path class="b" d="M1 1H15V15H1ZM3.5 5H5M6.5 5H13M3.5 8H5M6.5 8H11M3.5 11H8" /></svg></button>
      </div>
      <div class="scroll"><div class="list">
        ${NAV.map((n) => html`<button class="cat">${n}</button>`)}
        ${SUB.map(([i, n]) => html`<button class=${classMap({ sub: true, on: n === this.nav })} @click=${() => (this.nav = n)}><svg viewBox="0 0 20 20">${NAV_ICONS[i]}</svg><span>${n}</span></button>`)}
      </div><div class="thumb"></div></div>
    </nav>`;
  }

  private sidePanels() {
    const check = (n: string) => html`<input type="checkbox" aria-label=${n} />`;
    const exp = (n: string) => html`<div class="row"><button class="exp" aria-label="展开"><svg width="7" height="7" viewBox="0 0 7 7"><path d="M3.5 1V6M1 3.5H6" stroke="#555" /></svg></button>${n}</div>`;
    const rebar = html`<div class="row"><svg width="12" height="14" viewBox="0 0 12 14"><path d="M6 1V11M3 3.5H9Q10.5 3.5 10.5 5T9 6.5H3Q1.5 6.5 1.5 5T3 3.5M2 9.5H10M4 3V9.5M8 3V9.5" fill="none" stroke="#333" stroke-width="0.9" /></svg>8@200</div>`;
    const rows: [string, unknown, unknown, unknown][] = [
      ["1", html`<span class="blue">名称</span>`, "C8-200", nothing],
      ["2", "类别", "底筋", check("类别")],
      ["3", html`<span class="blue">钢筋信息</span>`, rebar, check("钢筋信息")],
      ["4", "备注", nothing, check("备注")],
      ["5", exp("钢筋业务属性"), nothing, nothing],
      ["14", exp("显示样式"), nothing, nothing],
    ];
    return html`<div class="mid">
      <section class="panel comp">${this.strip()}
        <div class="ptabs"><button>构件列表</button><button>图纸管理</button></div>
        <div class="ptools">${this.tool(T("newc", "新建", "v"))}${this.tool(T("copy", "复制"))}${this.tool(T("del", "删除"))}${this.tool(T("floorcopy", "层间复制"))}
          <button class="more" aria-label="更多"><svg width="8" height="6" viewBox="0 0 8 6"><path d="M0 0 3.5 3 0 6ZM4 0 7.5 3 4 6Z" fill="#444" /></svg></button></div>
        <div class="search"><input aria-label="搜索构件" placeholder="搜索构件..." /><svg width="11" height="11" viewBox="0 0 11 11"><circle cx="5" cy="5" r="4" fill="none" stroke="#999" /><path d="M8 8 10.5 10.5" stroke="#999" /></svg></div>
        <div class="tree"><div class="node"><i class="caret"></i>筏板主筋</div><button class="leaf">C8-200 &lt;0&gt;</button></div>
      </section>
      <section class="panel prop">${this.strip()}
        <div class="ptabs"><button>属性列表</button><button>图层管理</button></div>
        <div class="fill"><table>
          <colgroup><col width="22" /><col width="101" /><col width="113" /><col width="41" /></colgroup>
          <thead><tr><th></th><th>属性名称</th><th>属性值</th><th>附加</th></tr></thead>
          <tbody>${rows.map(([n, a, b, c]) => html`<tr><th>${n}</th><td>${a}</td><td>${b}</td><td class="c">${c}</td></tr>`)}</tbody>
        </table></div>
      </section></div>`;
  }

  private bubble(x: number, y: number, t: string) {
    const pts = Array.from({ length: 12 }, (_, i) => `${x + 12 * Math.cos((i * Math.PI) / 6)},${y + 12 * Math.sin((i * Math.PI) / 6)}`).join(" ");
    return svg`<polygon points=${pts} fill="none" stroke="#008200"/><text x=${x} y=${y + 7}>${t}</text>`;
  }

  private drawing() {
    return html`<div class="canvas"><svg viewBox="414 147 1036 817" preserveAspectRatio="xMinYMin slice">
      <rect x="520" y="303" width="867" height="458" fill="#646464" />
      ${GRID.map(([x1, y1, x2, y2, c, w]) => svg`<line x1=${x1} y1=${y1} x2=${x2} y2=${y2} stroke=${c} stroke-width=${w}/>`)}
      ${[520, 759, 953, 1147, 1387].map((x) => svg`<path d="M${x - 7} 843 ${x + 7} 829" stroke="#007800" fill="none"/>`)}
      ${AXES_TOP.map(([x, t]) => this.bubble(x, 159, t))}
      ${AXES_LEFT.map(([y, t]) => this.bubble(426, y, t))}
      ${DIMS.map(([x, y, t]) => svg`<text x=${x} y=${y}>${t}</text>`)}
      <rect x="759" y="417.5" width="194.5" height="304" fill="none" stroke="#e010e0" stroke-width="4" />
      <rect x="759" y="417.5" width="194.5" height="304" fill="none" stroke="#000" stroke-width="2" />
      <rect x="759" y="417.5" width="194.5" height="304" fill="none" stroke="#fff" stroke-width="2" stroke-dasharray="4 4" />
      <line x1="761" y1="562" x2="951" y2="562" stroke="#ffff32" stroke-width="2" />
      <text class="tag" x="856" y="557">C8-200:C8@200</text>
      <path d="M462 945V931H459L464 921 469 931H466V945Z" fill="#0f0" />
      <path d="M469 948H482V945L493 950 482 955V952H469Z" fill="#f00" />
      <circle cx="464" cy="950" r="5.5" fill="#0000be" />
      <text class="ax axy" x="464" y="920">Y</text>
      <text class="ax axx" x="500" y="956">X</text>
    </svg></div>`;
  }

  render() {
    const tabs = ["开始", "工程设置", "建模", "工程量", "视图", "工具", "云应用", "协同建模(限免)", "施工算量"];
    return html`
      <header class="tabs">
        <svg class="logo" viewBox="0 0 46 20"><path d="M17 0Q13 6 14 9 14.5 13 18.5 13T23 9Q24 6 20 0Z" fill="#0aa0f5" /><path d="M18 0Q14.5 8 18.5 12.5 22 8 19 0Z" fill="#0a78e6" /><path d="M39 12V16H35Z" fill="#555" /></svg>
        ${tabs.map((t) => html`<button class=${classMap({ tab: true, on: t === this.tab })} @click=${() => (this.tab = t)}>${t}</button>`)}
        <button class="floor3d">娄层三</button>
      </header>
      ${this.ribbonBar()}${this.optionsBar()}
      <div class="main">${this.navPanel()}${this.sidePanels()}
        <div class="gutter"><div class="handle"><svg width="4" height="6" viewBox="0 0 4 6"><path d="M3.5 0V6L0.5 3Z" fill="#ccc" /></svg></div></div>
        ${this.drawing()}</div>
      <div class="mark m1"></div><div class="dot d1">1</div>
      <div class="mark m2"></div><div class="dot d2">2</div>
      <div class="mark m3"></div><div class="dot d3">3</div>
      <div class="dot d4">4</div>`;
  }
}
